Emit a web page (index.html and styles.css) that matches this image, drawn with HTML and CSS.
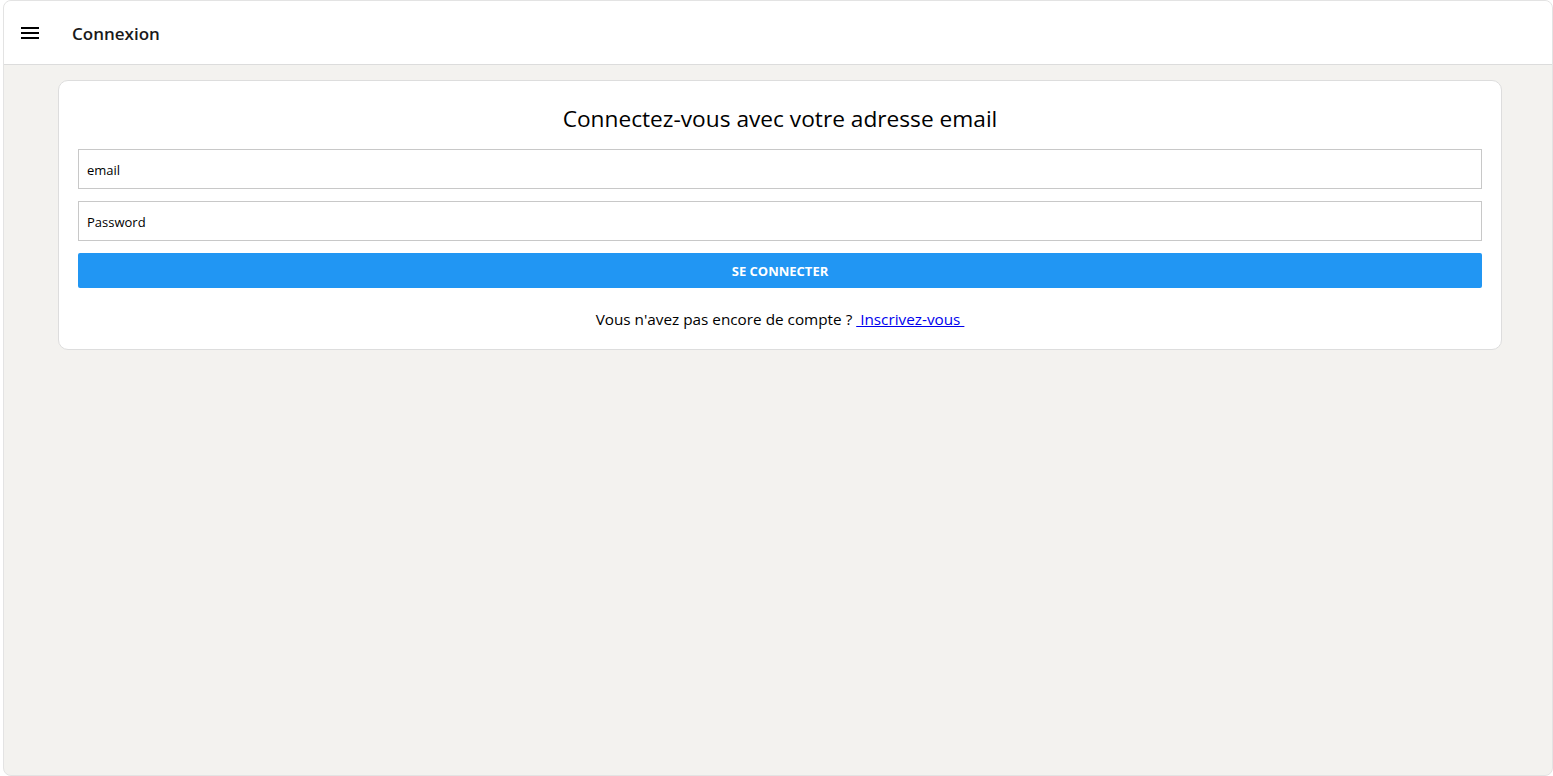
FILE: index.html
```html
<!DOCTYPE html>
<html lang="fr">
<head>
<meta charset="utf-8">
<title>Connexion</title>
<link rel="stylesheet" href="styles.css">
</head>
<body>
<div class="frame">
  <header class="topbar">
    <button class="menu-btn" aria-label="menu">
      <svg width="24" height="24" viewBox="0 0 24 24"><path d="M3 18h18v-2H3v2zm0-5h18v-2H3v2zm0-7v2h18V6H3z" fill="#000"/></svg>
    </button>
    <h1 class="page-title">Connexion</h1>
  </header>
  <main class="content">
    <section class="card">
      <h2 class="card-title">Connectez-vous avec votre adresse email</h2>
      <form class="login-form">
        <input class="field" type="text" placeholder="email">
        <input class="field" type="password" placeholder="Password">
        <button class="submit" type="button">Se connecter</button>
      </form>
      <p class="signup">Vous n'avez pas encore de compte ? <a href="#">&nbsp;Inscrivez-vous&nbsp;</a></p>
    </section>
  </main>
</div>
</body>
</html>
```
FILE: styles.css
```css
* { box-sizing: border-box; }
html, body { margin: 0; padding: 0; height: 100%; background: #fff; }
body { font-family: "Open Sans", "Noto Sans", sans-serif; color: #000; overflow: hidden; }

.frame {
  margin-left: 3px;
  height: 776px;
  border: 1px solid #e3e3e3;
  border-radius: 8px;
  overflow: hidden;
  display: flex;
  flex-direction: column;
  background: #f3f2ef;
}

.topbar {
  height: 64px;
  flex: none;
  background: #fff;
  border-bottom: 1px solid #dcdcdc;
  display: flex;
  align-items: center;
  padding: 0 0 0 14px;
}
.menu-btn {
  border: 0;
  background: none;
  padding: 0;
  width: 24px;
  height: 24px;
  display: block;
  margin-top: 1px;
}
.menu-btn svg { display: block; }
.page-title {
  margin: 2px 0 0 30px;
  font-size: 17px;
  font-weight: 600;
  color: #1a1a1a;
}

.content {
  flex: 1;
  padding: 15px 50px 0 54px;
}

.card {
  background: #fff;
  border: 1px solid #dddddd;
  border-radius: 10px;
  padding: 21px 19px 18px;
}
.card-title {
  margin: 0 0 13px;
  font-size: 22.7px;
  font-weight: 400;
  line-height: 34px;
  text-align: center;
}
.login-form {
  display: flex;
  flex-direction: column;
  gap: 12px;
}
.field {
  height: 40px;
  border: 1px solid #c8c8c8;
  border-radius: 0;
  padding: 1px 8px 0;
  font-family: inherit;
  font-size: 13px;
  color: #000;
  outline: none;
}
.field::placeholder { color: #000; opacity: 1; }
.submit {
  height: 35px;
  border: 0;
  border-radius: 2px;
  background: #2196f3;
  color: #fff;
  font-family: inherit;
  font-size: 13px;
  font-weight: 700;
  text-transform: uppercase;
}
.signup {
  margin: 19px 0 0;
  text-align: center;
  font-size: 15.3px;
  line-height: 24px;
}
.signup a { color: #0000ee; }
```
